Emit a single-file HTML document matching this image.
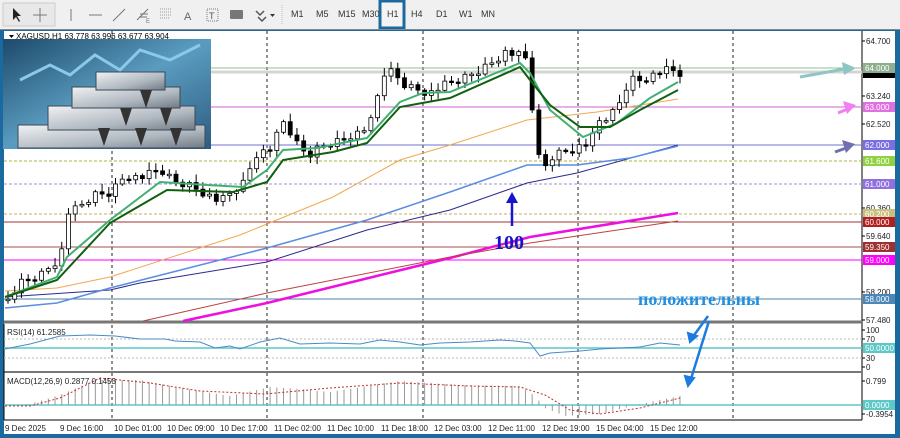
<!DOCTYPE html>
<html><head><meta charset="utf-8"><style>
body{margin:0;width:900px;height:438px;overflow:hidden;background:#1a6aa0;font-family:"Liberation Sans",sans-serif}
#tb{position:absolute;left:0;top:0;width:900px;height:29px;background:#f0f0f0;border-bottom:1px solid #888}
.t{position:absolute;top:9px;font-size:9px;color:#333}
#main{position:absolute;left:0;top:0}
</style></head><body>
<div id="tb">
<svg width="900" height="29" style="position:absolute;left:0;top:0">
<rect x="3" y="3" width="52" height="23" fill="#e8e8e8" stroke="#ccc"/>
<path d="M13 8 L13 20 L16 17 L19 22 L20 21 L17 16 L21 16 Z" fill="#222"/>
<path d="M40 8 V22 M33 15 H47" stroke="#777" stroke-width="1"/>
<path d="M71 9 V21" stroke="#777"/>
<path d="M89 15 H102" stroke="#777"/>
<path d="M113 21 L125 9" stroke="#777"/>
<path d="M137 20 L148 9 M140 14 H148 M139 17 H147" stroke="#777"/><text x="146" y="23" font-size="6" fill="#777">E</text>
<path d="M160 9 H172 M160 12 H172 M160 15 H172 M160 18 H170" stroke="#999" stroke-dasharray="1 1"/>
<text x="184" y="20" font-size="11" fill="#666">A</text>
<rect x="207" y="9" width="11" height="12" fill="none" stroke="#777" stroke-dasharray="1 1"/><text x="209" y="19" font-size="9" fill="#555">T</text>
<rect x="230" y="10" width="13" height="9" rx="1" fill="#777"/>
<path d="M256 11 L260 15 L264 11 M258 17 L262 21 L266 17" stroke="#555" stroke-width="1.5" fill="none"/><path d="M270 14 L275 14 L272.5 17Z" fill="#333"/>
<path d="M282 5 V25" stroke="#bbb" stroke-dasharray="1 1"/>
<rect x="380" y="1" width="24" height="27" fill="#f4f4f4" stroke="#1a6aa0" stroke-width="3"/>
</svg>
<span class="t" style="left:291px">M1</span><span class="t" style="left:316px">M5</span><span class="t" style="left:338px">M15</span><span class="t" style="left:362px">M30</span><span class="t" style="left:387px">H1</span><span class="t" style="left:411px">H4</span><span class="t" style="left:436px">D1</span><span class="t" style="left:459px">W1</span><span class="t" style="left:481px">MN</span>
</div>
<svg id="main" width="900" height="438" style="top:0">
<rect x="4" y="31" width="891" height="403" fill="#fff"/>
<g id="bg"></g>
</svg>
<script>
(function(){
var S='';
function ln(x1,y1,x2,y2,c,w,d){S+='<line x1="'+x1+'" y1="'+y1+'" x2="'+x2+'" y2="'+y2+'" stroke="'+c+'" stroke-width="'+(w||1)+'"'+(d?' stroke-dasharray="'+d+'"':'')+'/>';}
function tx(x,y,t,sz,c,a){S+='<text x="'+x+'" y="'+y+'" font-size="'+sz+'" fill="'+c+'" '+(a||'')+'>'+t+'</text>';}
function pl(p,c,w,d){S+='<polyline fill="none" stroke="'+c+'" stroke-width="'+(w||1)+'"'+(d?' stroke-dasharray="'+d+'"':'')+' points="'+p.map(function(q){return q[0]+','+q[1]}).join(' ')+'"/>';}
function interp(k,x){for(var i=0;i<k.length-1;i++){if(x<=k[i+1][0]){var t=(x-k[i][0])/(k[i+1][0]-k[i][0]);return k[i][1]+t*(k[i+1][1]-k[i][1]);}}return k[k.length-1][1];}
[112,267,423,578,733].forEach(function(x){ln(x,31,x,420,'#222',1,'3 3');});
ln(862,31,862,420,'#000');ln(4,322,862,322,'#777',3);ln(4,372,862,372,'#777',2);ln(4,420,862,420,'#000');
ln(4,324,4,420,'#000');
ln(4,339,862,339,'#bbb',1,'2 2');ln(4,358,862,358,'#bbb',1,'2 2');ln(4,348,862,348,'#5cc8c8',1.5);
ln(4,405,862,405,'#5cc8c8',1.5);
ln(4,68,862,68,'#90c090');ln(4,72,862,72,'#d4d4d4',3);ln(4,107,862,107,'#d060d0');ln(4,145,862,145,'#7070d0');
ln(4,161,862,161,'#b0b040',1,'3 2');ln(4,184,862,184,'#a090d0',1,'3 2');ln(4,214,862,214,'#c0b060',1,'3 2');
ln(4,222,862,222,'#a03030');ln(4,247,862,247,'#a05050');ln(4,260,862,260,'#ff00ff');ln(4,299,862,299,'#4a80a0');
pl([[183,321],[267,303],[450,258],[530,237],[678,213]],'#ee10e0',2.5);
pl([[143,321],[267,293],[450,257],[530,243],[678,221]],'#c04040',1);
pl([[5,297],[110,290],[140,283],[267,262],[367,230],[450,210],[527,183],[577,173],[678,145]],'#2a2a90',1);
pl([[5,308],[57,303],[110,288],[267,248],[367,220],[450,192],[527,165],[577,165],[630,158],[678,146]],'#5a8ee0',1.5);
pl([[5,291],[57,288],[110,277],[240,235],[333,197],[400,160],[450,145],[527,120],[597,112],[678,99]],'#f0a850',1);
var dg=[[5,297],[57,280],[110,223],[167,190],[233,192],[267,182],[283,160],[333,152],[367,143],[400,107],[450,98],[520,67],[530,80],[550,105],[580,127],[610,127],[640,110],[678,90]];
var lg=[[5,297],[57,277],[67,257],[110,220],[160,182],[207,185],[243,187],[267,170],[283,150],[317,148],[367,138],[400,102],[423,93],[450,92],[520,63],[530,73],[550,110],[583,137],[617,123],[650,98],[678,82]];
var k=[[8,300],[20,283],[40,275],[55,262],[62,250],[67,213],[75,210],[85,203],[95,195],[110,193],[125,175],[140,178],[160,170],[175,182],[190,185],[210,196],[220,202],[235,190],[245,182],[255,155],[270,150],[280,118],[290,133],[300,150],[310,155],[320,147],[340,140],[350,135],[360,132],[370,125],[378,95],[386,68],[395,75],[405,85],[420,90],[430,93],[445,85],[460,80],[480,70],[495,60],[505,52],[520,56],[528,60],[535,140],[542,172],[550,158],[560,152],[570,150],[580,146],[590,143],[600,120],[610,117],[620,102],[630,78],[640,80],[650,76],[660,72],[670,70],[680,74]];
var prev=interp(k,8),i=0;
for(var x=8;x<=681;x+=6.72){i++;var c=interp(k,x);var n=((i*37)%11)-5;c+=n*0.8;var o=prev;prev=c;
var top=Math.min(o,c),bot=Math.max(o,c);if(bot-top<1.5)bot=top+1.5;
var hi=top-2-((i*13)%7),lo=bot+2+((i*7)%6);
ln(x,hi,x,lo,'#000');
S+='<rect x="'+(x-2)+'" y="'+top+'" width="4" height="'+(bot-top)+'" fill="'+(c<o?'#fff':'#000')+'" stroke="#000" stroke-width="0.8"/>';}
pl(lg,'#40b070',2);pl(dg,'#106010',2);
pl([[5,349],[30,344],[60,336],[90,335],[115,336],[140,339],[165,339],[175,341],[200,342],[215,348],[230,346],[240,349],[260,342],[280,338],[300,344],[330,343],[360,344],[380,340],[400,342],[420,345],[440,343],[470,342],[500,340],[515,341],[530,343],[540,356],[550,353],[580,351],[600,349],[620,348],[640,347],[660,343],[680,345]],'#4a8ac8',1);
var hk=[[8,405],[30,404],[60,395],[95,380],[140,380],[180,388],[230,396],[270,387],[300,389],[330,392],[400,381],[460,385],[520,386],[535,396],[545,408],[565,416],[600,414],[640,404],[680,396]];
for(var x=8;x<=681;x+=6.72){var y=interp(hk,x);ln(x,405,x,y,'#999',1);}
pl([[5,406],[30,406],[60,398],[100,378],[150,383],[200,391],[265,394],[330,388],[400,383],[470,386],[520,387],[545,395],[570,410],[600,414],[640,408],[680,398]],'#c03030',1,'2 2');
[[41,'64.700'],[96,'63.240'],[124,'62.520'],[208,'60.360'],[236,'59.640'],[292,'58.200'],[320,'57.480'],[330,'100'],[339,'70'],[358,'30'],[367,'0'],[381,'0.799'],[414,'-0.3954']].forEach(function(a){ln(862,a[0],865,a[0],'#000');tx(866,a[0]+3,a[1],8,'#222');});
[[68,'64.000','#8fae8f'],[107,'63.000','#e070e0'],[145,'62.000','#7b6fe0'],[161,'61.600','#8fd13f'],[184,'61.000','#9070e0'],[214,'60.200','#c8c080'],[222,'60.000','#b02020'],[247,'59.350','#a03030'],[260,'59.000','#ff00ff'],[299,'58.000','#4a86b8'],[348,'50.0000','#5cc8c8'],[405,'0.0000','#5cc8c8']].forEach(function(a){S+='<rect x="863" y="'+(a[0]-5)+'" width="32" height="10" fill="'+a[2]+'"/>';tx(865,a[0]+3,a[1],8,'#fff');});
S+='<rect x="863" y="73" width="32" height="5" fill="#000"/>';
[[3,'9 Dec 2025'],[58,'9 Dec 16:00'],[112,'10 Dec 01:00'],[165,'10 Dec 09:00'],[218,'10 Dec 17:00'],[272,'11 Dec 02:00'],[325,'11 Dec 10:00'],[379,'11 Dec 18:00'],[432,'12 Dec 03:00'],[486,'12 Dec 11:00'],[540,'12 Dec 19:00'],[594,'15 Dec 04:00'],[648,'15 Dec 12:00']].forEach(function(a){tx(a[0]+2,431,a[1],8,'#222');});
tx(7,335,'RSI(14) 61.2585',8,'#222');tx(7,384,'MACD(12,26,9) 0.2877 0.1453',8,'#222');
S+='<defs><linearGradient id="g1" x1="0" y1="0" x2="1" y2="1"><stop offset="0" stop-color="#1d4a6a"/><stop offset=".5" stop-color="#5a9cc0"/><stop offset="1" stop-color="#2c5c80"/></linearGradient><linearGradient id="sb" x1="0" y1="0" x2="1" y2="1"><stop offset="0" stop-color="#f0f2f4"/><stop offset=".6" stop-color="#b0b8c0"/><stop offset="1" stop-color="#707a84"/></linearGradient></defs>';
S+='<rect x="3" y="39" width="208" height="110" fill="url(#g1)"/>';
pl([[20,80],[50,65],[70,75],[95,55],[120,70],[140,50],[170,60],[200,45]],'#8cc8e8',3);
[[18,125,187,23],[48,106,147,24],[72,87,108,21],[96,72,69,18]].forEach(function(r){S+='<rect x="'+r[0]+'" y="'+r[1]+'" width="'+r[2]+'" height="'+r[3]+'" fill="url(#sb)" stroke="#3a4a58" stroke-width="1"/>';});
[[98,128],[135,128],[170,128],[120,108],[160,108],[140,90]].forEach(function(p){S+='<path d="M'+p[0]+' '+p[1]+' l6 18 l6 -18z" fill="#333"/>';});
S+='<path d="M9 35 l5 0 l-2.5 3z" fill="#000"/>';tx(16,39,'XAGUSD,H1  63.778 63.996 63.677 63.904',8,'#000');
S+='<path d="M512 226 V200" stroke="#1515d0" stroke-width="2.5"/><path d="M506 203 L512 192 L518 203Z" fill="#1515d0"/>';
tx(494,249,'100',20,'#1515c8','font-weight="bold" font-family="Liberation Serif,serif"');
tx(638,305,'положительны',18,'#2090e0','font-weight="bold" font-family="Liberation Serif,serif"');
S+='<path d="M708 316 L692 338 M709 321 L690 382" stroke="#1e7be0" stroke-width="2.5"/><path d="M688 333 L690 342 L697 336Z M685 376 L688 386 L694 378Z" fill="#1e7be0" stroke="#1e7be0" stroke-width="2"/>';
S+='<path d="M800 77 L850 68" stroke="#8ec5c5" stroke-width="3"/><path d="M842 62 L856 68 L844 75Z" fill="#8ec5c5"/>';
S+='<path d="M838 113 L850 108" stroke="#f080f0" stroke-width="3"/><path d="M843 101 L856 105 L847 114Z" fill="#f080f0"/>';
S+='<path d="M835 152 L849 147" stroke="#7070b0" stroke-width="3"/><path d="M842 140 L855 144 L846 153Z" fill="#7070b0"/>';
document.getElementById('bg').innerHTML=S;
})();
</script>
</body></html>
